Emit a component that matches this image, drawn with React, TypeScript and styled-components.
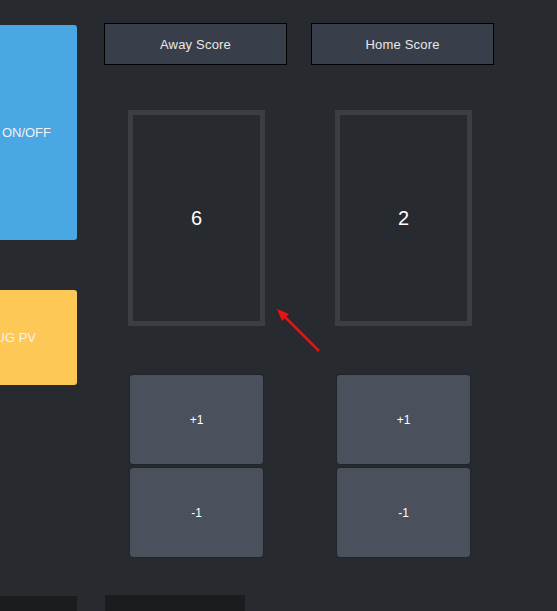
import React from "react";
import styled, { createGlobalStyle } from "styled-components";

const GlobalStyle = createGlobalStyle`
  html, body {
    margin: 0;
    padding: 0;
    background: #272a2f;
    overflow: hidden;
  }
  body {
    font-family: "Liberation Sans", Arial, sans-serif;
  }
`;

const Page = styled("div")`
  position: relative;
  width: 557px;
  height: 611px;
  overflow: hidden;
  background: #272a2f;
  display: flex;
  flex-direction: column;
`;

const Main = styled("div")`
  display: flex;
  align-items: flex-start;
  padding-top: 23px;
  height: 572px;
  flex-shrink: 0;
  box-sizing: border-box;
`;

const SideColumn = styled("div")`
  width: 77px;
  display: flex;
  flex-direction: column;
  padding-top: 2px;
  gap: 50px;
`;

const SideButton = styled("div")<{ $color: string; $height: number; $pad: number; $w: number }>`
  width: ${(p) => p.$w}px;
  margin-left: ${(p) => 77 - p.$w}px;
  height: ${(p) => p.$height}px;
  background: ${(p) => p.$color};
  border-radius: 3px;
  display: flex;
  align-items: center;
  justify-content: flex-end;
  padding-right: ${(p) => p.$pad}px;
  box-sizing: border-box;
  color: #f2f2f2;
  font-size: 13px;
  white-space: nowrap;
`;

const Scores = styled("div")`
  display: flex;
  gap: 24px;
  margin-left: 27px;
`;

const Column = styled("div")`
  width: 183px;
  display: flex;
  flex-direction: column;
  align-items: center;
`;

const Header = styled("div")`
  width: 100%;
  height: 42px;
  box-sizing: border-box;
  background: #393f4a;
  border: 1px solid #000;
  display: flex;
  align-items: center;
  justify-content: center;
  color: #e8e8e8;
  font-size: 13px;
  letter-spacing: 0.2px;
`;

const ScoreBox = styled("div")`
  margin-top: 45px;
  margin-left: 2px;
  width: 137px;
  height: 216px;
  box-sizing: border-box;
  border: 5px solid #3b3e43;
  background: #272a2f;
  display: flex;
  align-items: center;
  justify-content: center;
  color: #ffffff;
  font-size: 20px;
`;

const Buttons = styled("div")`
  margin-top: 49px;
  margin-left: 2px;
  display: flex;
  flex-direction: column;
  gap: 4px;
`;

const StepButton = styled("div")`
  width: 133px;
  height: 89px;
  border-radius: 3px;
  background: #4a505c;
  box-shadow: 0 0 2px rgba(0, 0, 0, 0.45);
  display: flex;
  align-items: center;
  justify-content: center;
  color: #ffffff;
  font-size: 12px;
`;

const BottomRow = styled("div")`
  margin-top: 23px;
  display: flex;
  align-items: flex-start;
  gap: 28px;
  flex-shrink: 0;
`;

const DarkTile = styled("div")<{ $w: number; $top: number }>`
  width: ${(p) => p.$w}px;
  height: 20px;
  margin-top: ${(p) => p.$top}px;
  background: #1b1c1e;
`;

const Arrow = styled("svg")`
  position: absolute;
  left: 270px;
  top: 300px;
`;

const teams = [
  { label: "Away Score", score: 6 },
  { label: "Home Score", score: 2 },
];

export default function App() {
  return (
    <Page>
      <GlobalStyle />
      <Main>
        <SideColumn>
          <SideButton $color="#49a7e3" $height={215} $pad={26} $w={100}>
            ON/OFF
          </SideButton>
          <SideButton $color="#fec857" $height={95} $pad={41} $w={100}>
            UG PV
          </SideButton>
        </SideColumn>
        <Scores>
          {teams.map((t) => (
            <Column key={t.label}>
              <Header>{t.label}</Header>
              <ScoreBox>{t.score}</ScoreBox>
              <Buttons>
                <StepButton>+1</StepButton>
                <StepButton>-1</StepButton>
              </Buttons>
            </Column>
          ))}
        </Scores>
      </Main>
      <BottomRow>
        <DarkTile $w={77} $top={1} />
        <DarkTile $w={140} $top={0} />
      </BottomRow>
      <Arrow width="60" height="60" viewBox="0 0 60 60">
        <line x1="49" y1="51" x2="12" y2="14" stroke="#ee1111" strokeWidth="2.5" />
        <polygon points="7,9 19,14 12,21" fill="#ee1111" />
      </Arrow>
    </Page>
  );
}
